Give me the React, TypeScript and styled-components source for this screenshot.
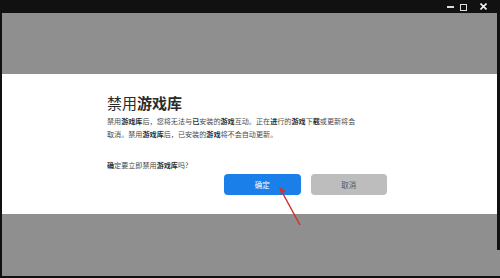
import React from 'react'
import styled, { createGlobalStyle } from 'styled-components';

const Global = createGlobalStyle`
  html, body {
    margin: 0;
    padding: 0;
    background: #111;
  }
  body {
    font-family: "Noto Sans CJK SC", "Noto Sans", sans-serif;
  }
`

function App() {
  return (
    <>
      <Global />
      <Window>
        <TitleBar>
          <Minimize />
          <Maximize />
          <Close>
            <svg width="7" height="7" viewBox="0 0 7 7">
              <path d="M0.5 0.5L6.5 6.5M6.5 0.5L0.5 6.5" stroke="#f2f2f2" strokeWidth="1.6" />
            </svg>
          </Close>
        </TitleBar>
        <Body>
          <Shade />
          <Dialog>
            <Inner>
              <Title>禁用<b>游戏库</b></Title>
              <Text>
                <Line>禁用<b>游戏库</b>后，您将无法与<b>已</b>安装的<b>游戏</b>互动。正在<b>进</b>行的<b>游戏</b>下<b>载</b>或更新将会</Line>
                <Line>取消。禁用<b>游戏库</b>后，已安装的<b>游戏</b>将不会自动更新。</Line>
              </Text>
              <Question><b>确</b>定要立即禁用<b>游戏库</b>吗?</Question>
              <Buttons>
                <Button $primary>确定</Button>
                <Button>取消</Button>
              </Buttons>
            </Inner>
          </Dialog>
          <Shade $bottom />
          <Arrow width="26" height="42" viewBox="0 0 26 42">
            <path d="M22 39L3.5 5" stroke="#d0312d" strokeWidth="1.5" />
            <path d="M1 1L8 5L3 8Z" fill="#d0312d" />
          </Arrow>
        </Body>
      </Window>
    </>
  )
}

export default App;

const Window = styled.div`
  width: 500px;
  height: 278px;
  background: #111;
  display: flex;
  flex-direction: column;
  padding: 0 0 2px 2px;
  box-sizing: border-box;
  overflow: hidden;
`

const TitleBar = styled.div`
  height: 13px;
  display: flex;
  align-items: center;
  justify-content: flex-end;
  padding-right: 13px;
`

const Minimize = styled.span`
  width: 7px;
  height: 2px;
  background: #ddd;
  margin-top: 1px;
`

const Maximize = styled.span`
  width: 5px;
  height: 5px;
  border: 1px solid #ddd;
  margin: 2px 13px 0 6px;
`

const Close = styled.span`
  display: flex;
  align-items: center;
  margin-bottom: 1px;
`

const Body = styled.div`
  flex: 1;
  display: flex;
  flex-direction: column;
  position: relative;
`

const Shade = styled.div<{ $bottom?: boolean }>`
  height: ${p => (p.$bottom ? '62px' : '61px')};
  background: ${p => (p.$bottom
    ? 'linear-gradient(to left, #111 3px, transparent 3px) top right / 100% 36px no-repeat, #8f8f8f'
    : '#8f8f8f')};
  border-right: ${p => (p.$bottom ? 'none' : '3px solid #111')};
`

const Dialog = styled.div`
  height: 140px;
  background: #fff;
  border-right: 3px solid #111;
  box-sizing: border-box;
  padding: 20px 0 0 105px;
`

const Inner = styled.div`
  width: 280px;
  display: flex;
  flex-direction: column;
`

const Title = styled.div`
  font-size: 15px;
  line-height: 18px;
  color: #2a2a2a;
  b { font-weight: 700; }
`

const Text = styled.div`
  margin-top: 3px;
  font-size: 7.1px;
  line-height: 13px;
  color: #4a4a4a;
  b { font-weight: 700; color: #333; }
`

const Line = styled.div`
  white-space: nowrap;
`

const Question = styled.div`
  margin-top: 18px;
  font-size: 7.1px;
  line-height: 13px;
  color: #4a4a4a;
  b { font-weight: 700; color: #333; }
`

const Buttons = styled.div`
  margin-top: 2px;
  display: flex;
  gap: 10px;
  padding-left: 117px;
`

const Button = styled.div<{ $primary?: boolean }>`
  width: 77px;
  height: 21px;
  border-radius: 4px;
  display: flex;
  align-items: center;
  justify-content: center;
  font-size: 7.5px;
  color: ${p => (p.$primary ? '#fff' : '#555')};
  background: ${p => (p.$primary ? '#1a7fe8' : '#bdbdbd')};
`

const Arrow = styled.svg`
  position: absolute;
  left: 276px;
  top: 173px;
`
